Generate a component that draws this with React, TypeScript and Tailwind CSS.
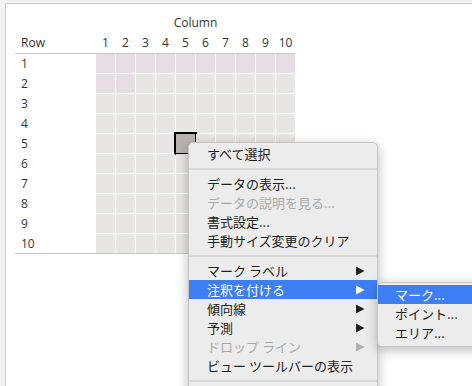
import React from "react";

const latin = { fontFamily: '"Open Sans", "DejaVu Sans", sans-serif' };
const jp = { fontFamily: '"Noto Sans CJK JP", "Noto Sans", sans-serif' };

function Arrow({ color }: { color: string }) {
  return (
    <svg width="9" height="10" viewBox="0 0 9 10" className="shrink-0">
      <polygon points="0,0.5 8.5,5 0,9.5" fill={color} />
    </svg>
  );
}

type Item =
  | { type: "sep" }
  | { type: "item"; label: string; disabled?: boolean; sub?: boolean; active?: boolean };

const items: Item[] = [
  { type: "item", label: "すべて選択" },
  { type: "sep" },
  { type: "item", label: "データの表示..." },
  { type: "item", label: "データの説明を見る...", disabled: true },
  { type: "item", label: "書式設定..." },
  { type: "item", label: "手動サイズ変更のクリア" },
  { type: "sep" },
  { type: "item", label: "マーク ラベル", sub: true },
  { type: "item", label: "注釈を付ける", sub: true, active: true },
  { type: "item", label: "傾向線", sub: true },
  { type: "item", label: "予測", sub: true },
  { type: "item", label: "ドロップ ライン", sub: true, disabled: true },
  { type: "item", label: "ビュー ツールバーの表示" },
  { type: "sep" },
];

export default function App() {
  const cols = Array.from({ length: 10 }, (_, i) => i + 1);
  const rows = Array.from({ length: 10 }, (_, i) => i + 1);

  const cellColor = (r: number, c: number) => {
    if (r === 1) return "bg-[#e7dde5]";
    if (r === 2 && c <= 2) return "bg-[#e7dde5]";
    return "bg-[#e7e6e4]";
  };

  return (
    <div className="relative w-[472px] h-[386px] overflow-hidden bg-[#f2f2f2] pt-[3px] pl-[5px]">
      <div className="h-[400px] bg-white border-t border-l border-[#cbcbcb]">
        <div className="pl-[9px] text-[12px] text-[#333]" style={latin}>
          <div className="mt-[12px] h-[14px] leading-[14px] flex">
            <div className="w-[81px]" />
            <div className="w-[199px] text-center">Column</div>
          </div>
          <div className="mt-[6px] h-[14px] leading-[14px] flex">
            <div className="w-[81px] pl-[6px]">Row</div>
            <div className="flex gap-px">
              {cols.map((c) => (
                <div key={c} className="w-[19px] text-center">
                  {c}
                </div>
              ))}
            </div>
          </div>
          <div className="mt-[3px] h-px w-[280px] bg-[#c8c8c8]" />
          <div className="flex flex-col gap-px w-[280px]">
            {rows.map((r) => (
              <div key={r} className="flex h-[19px]">
                <div className="w-[81px] pl-[6px] leading-[19px]">{r}</div>
                <div className="flex gap-px">
                  {cols.map((c) =>
                    r === 5 && c === 5 ? (
                      <div
                        key={c}
                        className="w-[19px] h-[19px] bg-[#bab2ae] outline-2 outline-black"
                      />
                    ) : (
                      <div key={c} className={`w-[19px] h-[19px] ${cellColor(r, c)}`} />
                    )
                  )}
                </div>
              </div>
            ))}
          </div>
          <div className="h-px w-[280px] bg-[#c8c8c8]" />
        </div>
      </div>

      {/* Context menu */}
      <div
        className="absolute left-[188px] top-[142px] w-[190px] h-[280px] rounded-[5px] bg-[#ececec] border border-[#c6c6c6] shadow-[0_3px_12px_rgba(0,0,0,0.28)] pt-[1px] text-[13px]"
        style={jp}
      >
        {items.map((it, i) =>
          it.type === "sep" ? (
            <div key={i} className="h-[11px] flex items-center">
              <div className="h-[2px] w-full bg-[#dadada]" />
            </div>
          ) : (
            <div
              key={i}
              className={`h-[19px] flex items-center justify-between pl-[18px] pr-[12px] leading-[19px] ${
                it.active ? "bg-[#3f7ff4] text-white" : it.disabled ? "text-[#aaaaaa]" : "text-[#222]"
              }`}
            >
              <span className="whitespace-nowrap">{it.label}</span>
              {it.sub && (
                <Arrow color={it.active ? "#ffffff" : it.disabled ? "#b0b0b0" : "#222222"} />
              )}
            </div>
          )
        )}
      </div>

      {/* Submenu */}
      <div
        className="absolute left-[377px] top-[282px] w-[120px] h-[65px] rounded-[5px] bg-[#ececec] border border-[#c6c6c6] shadow-[0_3px_12px_rgba(0,0,0,0.28)] pt-[2px] text-[13px]"
        style={jp}
      >
        <div className="h-[19px] leading-[19px] pl-[17px] bg-[#3f7ff4] text-white whitespace-nowrap">
          マーク...
        </div>
        <div className="h-[19px] leading-[19px] pl-[17px] text-[#222] whitespace-nowrap">
          ポイント...
        </div>
        <div className="h-[19px] leading-[19px] pl-[17px] text-[#222] whitespace-nowrap">
          エリア...
        </div>
      </div>
    </div>
  );
}
